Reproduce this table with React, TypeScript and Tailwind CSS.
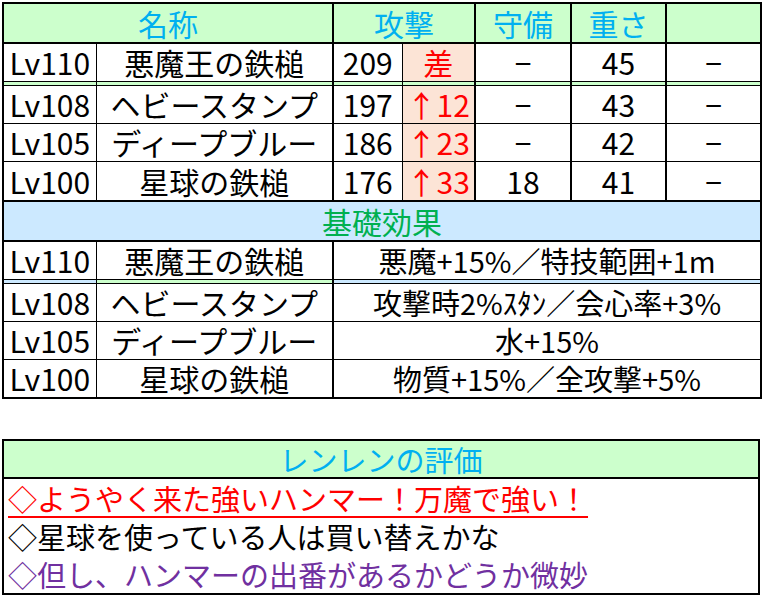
import { Fragment } from "react";

const font = "font-['Noto_Sans_CJK_JP','Noto_Sans_CJK_SC',sans-serif]";
const cell = "border border-black p-0 text-center align-middle whitespace-nowrap";
const green = "bg-[#ccffcc]";
const peach = "bg-[#fce4d6] text-[#ff0000]";

const stats = [
  { lv: "Lv110", name: "悪魔王の鉄槌", atk: "209", diff: "差", def: "−", wt: "45", ex: "−" },
  { lv: "Lv108", name: "ヘビースタンプ", atk: "197", diff: "↑12", def: "−", wt: "43", ex: "−" },
  { lv: "Lv105", name: "ディープブルー", atk: "186", diff: "↑23", def: "−", wt: "42", ex: "−" },
  { lv: "Lv100", name: "星球の鉄槌", atk: "176", diff: "↑33", def: "18", wt: "41", ex: "−" },
];

const effects = [
  { lv: "Lv110", name: "悪魔王の鉄槌", eff: "悪魔+15%／特技範囲+1m" },
  { lv: "Lv108", name: "ヘビースタンプ", eff: "攻撃時2%ｽﾀﾝ／会心率+3%" },
  { lv: "Lv105", name: "ディープブルー", eff: "水+15%" },
  { lv: "Lv100", name: "星球の鉄槌", eff: "物質+15%／全攻撃+5%" },
];

export default function App() {
  return (
    <div className={`w-[763px] h-[600px] bg-white overflow-hidden text-black ${font}`}>
      <table className="table-fixed border-collapse border-2 border-black ml-[2px] mt-[2px] w-[758px] text-[30px] leading-none">
        <colgroup>
          <col className="w-[93px]" />
          <col className="w-[237px]" />
          <col className="w-[69px]" />
          <col className="w-[73px]" />
          <col className="w-[96px]" />
          <col className="w-[95px]" />
          <col className="w-[95px]" />
        </colgroup>
        <tbody>
          <tr className="h-[40px]">
            <td colSpan={2} className={`${cell} ${green} text-[#00b0f0] border-b-2`}>名称</td>
            <td colSpan={2} className={`${cell} ${green} text-[#00b0f0] border-b-2 border-l-2`}>攻撃</td>
            <td className={`${cell} ${green} text-[#00b0f0] border-b-2 border-l-2`}>守備</td>
            <td className={`${cell} ${green} text-[#00b0f0] border-b-2 border-l-2`}>重さ</td>
            <td className={`${cell} ${green} border-b-2 border-l-2`}></td>
          </tr>
          {stats.map((r, i) => (
            <Fragment key={r.lv}>
              <tr className={i === 3 ? "h-[40px]" : "h-[38px]"}>
                <td className={`${cell} ${i === 3 ? "border-b-2" : ""}`}>{r.lv}</td>
                <td className={`${cell} ${i === 3 ? "border-b-2" : ""}`}>{r.name}</td>
                <td className={`${cell} border-l-2 ${i === 3 ? "border-b-2" : ""}`}>{r.atk}</td>
                <td className={`${cell} ${peach} ${i === 3 ? "border-b-2" : ""}`}>{r.diff}</td>
                <td className={`${cell} border-l-2 ${i === 3 ? "border-b-2" : ""}`}>{r.def}</td>
                <td className={`${cell} border-l-2 ${i === 3 ? "border-b-2" : ""}`}>{r.wt}</td>
                <td className={`${cell} border-l-2 ${i === 3 ? "border-b-2" : ""}`}>{r.ex}</td>
              </tr>
              {i === 0 && (
                <tr className="h-[4px]">
                  <td className={`${cell} ${green}`}></td>
                  <td className={`${cell} ${green}`}></td>
                  <td className={`${cell} ${green} border-l-2`}></td>
                  <td className={`${cell} ${green}`}></td>
                  <td className={`${cell} ${green} border-l-2`}></td>
                  <td className={`${cell} ${green} border-l-2`}></td>
                  <td className={`${cell} ${green} border-l-2`}></td>
                </tr>
              )}
            </Fragment>
          ))}
          <tr className="h-[40px]">
            <td colSpan={7} className={`${cell} bg-[#cce9ff] text-[#00b050] border-b-2`}>基礎効果</td>
          </tr>
          {effects.map((r, i) => (
            <Fragment key={"e" + r.lv}>
              <tr className={i === 3 ? "h-[39px]" : "h-[38px]"}>
                <td className={cell}>{r.lv}</td>
                <td className={cell}>{r.name}</td>
                <td colSpan={5} className={`${cell} border-l-2 text-[29px]`}>{r.eff}</td>
              </tr>
              {i === 0 && (
                <tr className="h-[4px]">
                  <td className={`${cell} bg-[#cce9ff]`}></td>
                  <td className={`${cell} ${green}`}></td>
                  <td colSpan={5} className={`${cell} bg-[#cce9ff] border-l-2`}></td>
                </tr>
              )}
            </Fragment>
          ))}
        </tbody>
      </table>

      <div className="ml-[2px] mt-[40px] w-[758px] border-2 border-black text-[29px] leading-none">
        <div className={`h-[38px] ${green} text-[#00b0f0] flex items-center justify-center border-b-2 border-black`}>
          レンレンの評価
        </div>
        <div className="h-[38px] flex items-center pl-[4px] text-[#ff0000]">
          <span className="underline decoration-[2px] underline-offset-[5px]">◇ようやく来た強いハンマー！万魔で強い！</span>
        </div>
        <div className="h-[38px] flex items-center pl-[4px]">◇星球を使っている人は買い替えかな</div>
        <div className="h-[38px] flex items-center pl-[4px] text-[#7030a0]">◇但し、ハンマーの出番があるかどうか微妙</div>
      </div>
    </div>
  );
}
